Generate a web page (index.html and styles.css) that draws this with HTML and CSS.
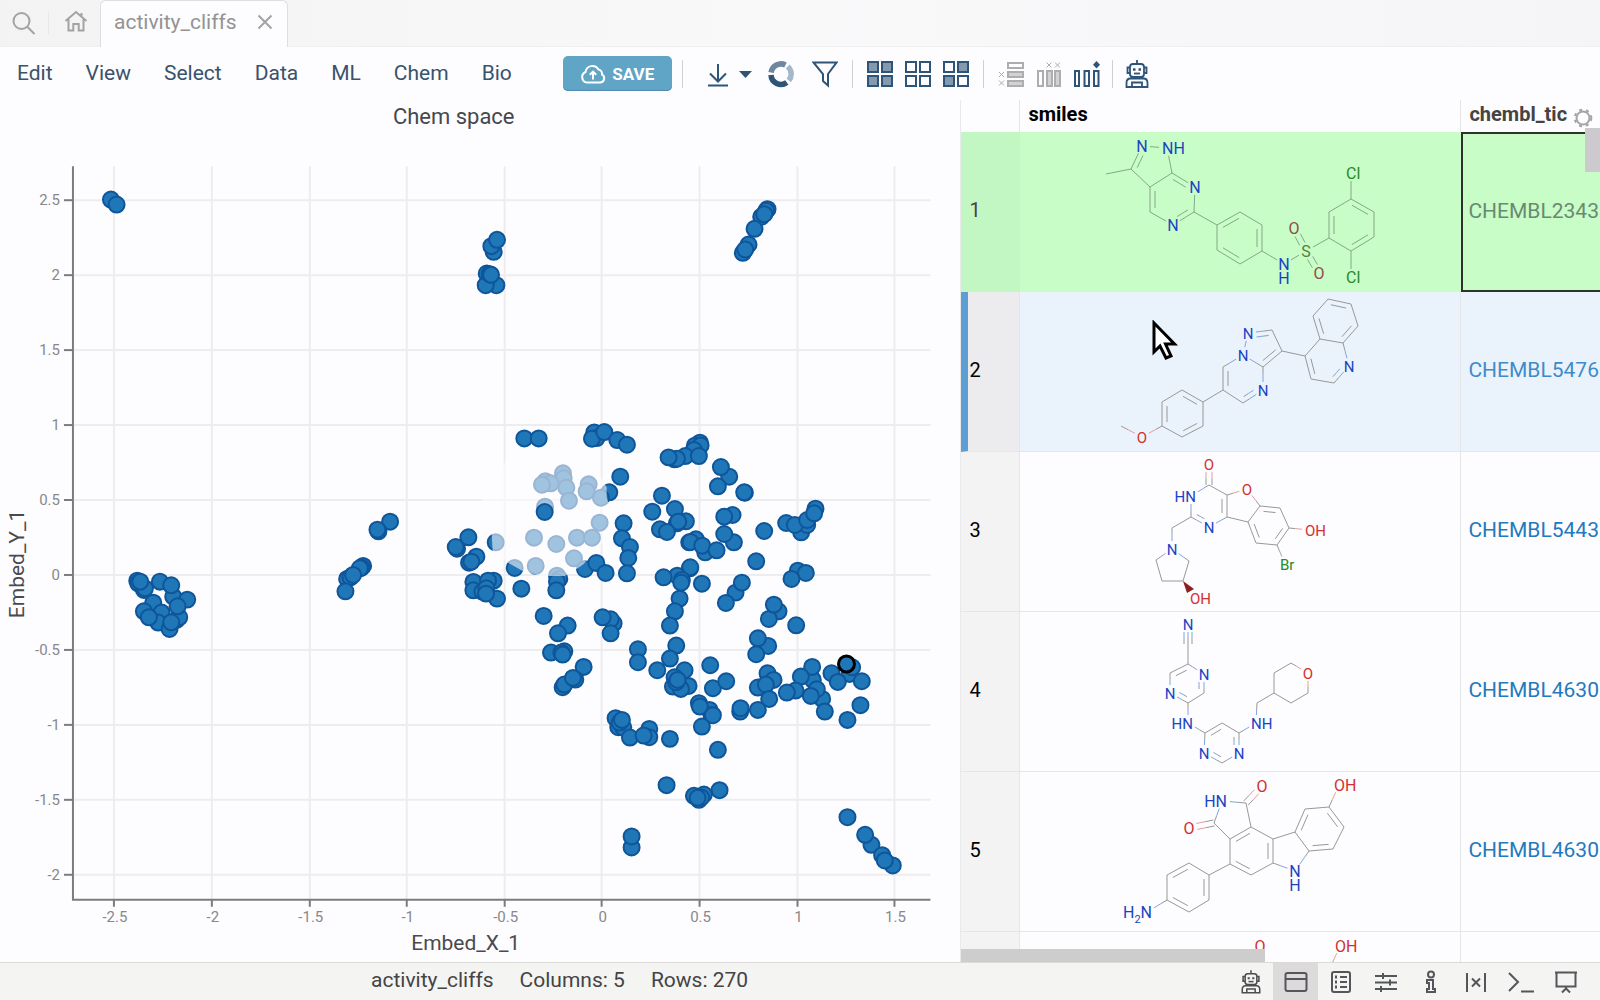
FILE: index.html
```html
<!DOCTYPE html>
<html lang="en">
<head>
<meta charset="utf-8">
<title>activity_cliffs</title>
<link rel="stylesheet" href="styles.css">
</head>
<body>
<header class="tabs">
  <button class="tabs-btn" aria-label="Search"><svg width="24" height="24" viewBox="0 0 24 24"><circle cx="9.500" cy="10" r="8"/><path d="M15.500 16l7 7"/></svg></button>
  <span class="tabs-sep"></span>
  <button class="tabs-btn home" aria-label="Home"><svg width="24" height="24" viewBox="0 0 24 24"><path d="M1.500 12L12 3l10.500 9M4.500 10v11.500h4.800v-6.500h5.400v6.500h4.800V10M17.500 4v4"/></svg></button>
  <div class="tab"><span>activity_cliffs</span><button class="tab-close" aria-label="Close tab"><svg width="16" height="16" viewBox="0 0 16 16"><path d="M1.500 1.500l13 13M14.500 1.500l-13 13"/></svg></button></div>
</header>

<nav class="toolbar">
  <div class="menu">
    <button>Edit</button><button>View</button><button>Select</button><button>Data</button><button>ML</button><button>Chem</button><button>Bio</button>
  </div>
  <button class="save"><svg width="26" height="22" viewBox="0 0 26 22"><path d="M7 19.500a5.500 5.500 0 0 1-1.500-10.500A7 7 0 0 1 18.500 6.500a4.500 4.500 0 0 1 3.500 5A4.300 4.300 0 0 1 20.500 19.500zM13 16.500V9M9.800 11.800L13 8.600l3.200 3.200"/></svg>SAVE</button>
  <div class="tools">
    <span class="sep"></span>
    <button class="tool download" aria-label="Download"><svg width="48" height="28" viewBox="0 0 48 28"><path class="line" d="M12 4v17M4 13.500l8 8 8-8M2 25.500h20"/><path class="solid" d="M33 11h13l-6.500 7z"/></svg></button>
    <button class="tool donut" aria-label="Usage"><svg width="26" height="28" viewBox="0 0 26 28"><g fill="none" stroke-width="5.500"><path stroke="#6e87a0" d="M3.100 12.500A10 10 0 0 1 17.500 5"/><path stroke="#a3b8ca" d="M19.700 6.500A10 10 0 0 1 20.800 20.500"/><path stroke="#2c5578" d="M3 15A10 10 0 0 0 18.800 22.500"/></g></svg></button>
    <button class="tool" aria-label="Filter"><svg width="26" height="28" viewBox="0 0 26 28"><path class="line" d="M1.500 2.500h23L16 14v11.500l-5-4.500v-7z"/></svg></button>
    <span class="sep"></span>
    <button class="tool" aria-label="Select all"><svg width="26" height="28" viewBox="0 0 26 28"><path class="line box full" d="M1 2h10v10H1zM15 2h10v10H15zM1 16h10v10H1zM15 16h10v10H15z"/></svg></button>
    <button class="tool" aria-label="Select none"><svg width="26" height="28" viewBox="0 0 26 28"><path class="line box" d="M1 2h10v10H1zM15 2h10v10H15zM1 16h10v10H1zM15 16h10v10H15z"/></svg></button>
    <button class="tool" aria-label="Invert selection"><svg width="26" height="28" viewBox="0 0 26 28"><path class="line box" d="M1 2h10v10H1zM15 16h10v10H15z"/><path class="line box full" d="M15 2h10v10H15zM1 16h10v10H1z"/></svg></button>
    <span class="sep"></span>
    <button class="tool off" aria-label="Remove rows"><svg width="26" height="28" viewBox="0 0 26 28"><path class="line box" d="M10 3h15v5H10z"/><path class="line box full" d="M10 12h15v5H10zM10 21h15v5H10z"/><path class="line" d="M1 12l5 5M6 12l-5 5M1 20.500l5 5M6 20.500l-5 5"/></svg></button>
    <button class="tool off" aria-label="Remove columns"><svg width="26" height="28" viewBox="0 0 26 28"><path class="line box" d="M2 11h5v15H2z"/><path class="line box full" d="M11 11h5v15h-5zM19 11h5v15h-5z"/><path class="line" d="M10.500 2.500l5 5M15.500 2.500l-5 5M19 2.500l5 5M24 2.500l-5 5"/></svg></button>
    <button class="tool" aria-label="Add column"><svg width="26" height="28" viewBox="0 0 26 28"><path class="line box" d="M1 11h4v15H1zM10.500 11h4.500v15h-4.500zM20 11h4.500v15H20z"/><path class="solid" d="M22.500 1l3.500 3.700-3.500 3.700L19 4.700z"/></svg></button>
    <span class="sep tight"></span>
    <button class="tool" aria-label="Assistant"><svg width="24" height="28" viewBox="0 0 24 28"><use href="#robot"/></svg></button>
  </div>
</nav>

<main class="main">
  <section class="chart" aria-label="Chem space">
    <svg id="plot" viewBox="0 100 961 862" role="img" aria-label="Scatter plot of Embed_Y_1 against Embed_X_1">
      <text class="plot-title" x="454" y="124">Chem space</text>
      <g id="axes"></g>
      <g id="points"></g>
      <text class="axis-title" x="466" y="950">Embed_X_1</text>
      <text class="axis-title" transform="translate(24 564) rotate(-90)">Embed_Y_1</text>
    </svg>
  </section>
  <section class="grid">
    <table>
      <colgroup><col class="c-num"><col class="c-mol"><col class="c-id"></colgroup>
      <thead><tr><th></th><th>smiles</th><th class="clipped">chembl_tic</th></tr></thead>
      <tbody>
        <tr class="selected"><th>1</th><td><svg class="mol"></svg></td><td class="current">CHEMBL2343</td></tr>
        <tr class="hover"><th>2</th><td><svg class="mol"></svg><svg class="pointer" width="28" height="42" viewBox="0 0 28 42"><path d="M2 3v29l6-6 6 12 5-2-5.500-12h9z"/></svg></td><td>CHEMBL5476</td></tr>
        <tr><th>3</th><td><svg class="mol"></svg></td><td>CHEMBL5443</td></tr>
        <tr><th>4</th><td><svg class="mol"></svg></td><td>CHEMBL4630</td></tr>
        <tr><th>5</th><td><svg class="mol"></svg></td><td>CHEMBL4630</td></tr>
        <tr><th></th><td><svg class="mol"></svg></td><td></td></tr>
      </tbody>
    </table>
    <button class="gear" aria-label="Grid settings"><svg width="20" height="20" viewBox="0 0 20 20"><circle cx="10" cy="10" r="6.500"/><circle class="teeth" cx="10" cy="10" r="8.300"/></svg></button>
    <span class="thumb-v"></span><span class="thumb-h"></span>
  </section>
</main>

<footer class="status">
  <div class="facts"><span>activity_cliffs</span><span>Columns: 5</span><span>Rows: 270</span></div>
  <div class="panels">
    <button aria-label="Assistant"><svg width="20" height="24" viewBox="0 0 24 28"><use href="#robot"/></svg></button>
    <button class="on" aria-label="Table view"><svg width="24" height="24" viewBox="0 0 24 24"><rect x="1.500" y="3" width="21" height="18" rx="2"/><path d="M2 9h20"/></svg></button>
    <button aria-label="Properties"><svg width="24" height="24" viewBox="0 0 24 24"><rect x="3" y="2" width="18" height="20" rx="2"/><path d="M11 7h7M11 12h7M11 17h7"/><path class="dots" d="M6 7h2M6 12h2M6 17h2"/></svg></button>
    <button aria-label="Settings"><svg width="24" height="24" viewBox="0 0 24 24"><path d="M1 6h22M1 12.500h22M1 19h22M9 3v6M16 9.500v6M7 16v6"/></svg></button>
    <button aria-label="Info"><svg width="24" height="24" viewBox="0 0 24 24"><circle cx="12" cy="4.500" r="3"/><path d="M8 10h6v9h2v3H8v-3h2v-6H8z"/></svg></button>
    <button aria-label="Variables"><svg width="24" height="24" viewBox="0 0 24 24"><path d="M3 3v19M21 3v19M8 8.500l8 8M16 8.500l-8 8"/></svg></button>
    <button aria-label="Console"><svg width="28" height="24" viewBox="0 0 28 24"><path d="M2 3l9 9-9 9M14 21.500h13"/></svg></button>
    <button aria-label="Presentation"><svg width="24" height="24" viewBox="0 0 24 24"><path d="M1 2.500h22M2.500 2.500v14h19v-14M12 16.500v3M8 22.500l4-4 4 4"/></svg></button>
  </div>
</footer>

<svg class="defs" aria-hidden="true"><symbol id="robot" viewBox="0 0 24 28" overflow="visible"><g fill="none" stroke="currentColor" stroke-width="1.800"><path d="M12 0v4M5 7q0-3 3-3h8q3 0 3 3v7q0 3-3 3H8q-3 0-3-3zM5 7.500H2.500V13H5M19 7.500h2.500V13H19M1.500 27v-4q0-4.500 4-4.500h13q4 0 4 4.500v4zM7 27v-4.500h10V27"/><path d="M9 13.500h6"/><path stroke-width="2.600" d="M8 9.500h2.500M13.500 9.500H16"/></g></symbol></svg>
<script src="draw.js"></script>
</body>
</html>
```
FILE: styles.css
```css
* { box-sizing: border-box; }
body { margin: 0; height: 100vh; display: flex; flex-direction: column; overflow: hidden; background: #fdfcfe; color: #333; font: 20px/24px Roboto, sans-serif; }
button { border: 0; padding: 0; margin: 0; background: none; font: inherit; color: inherit; }
svg { display: block; }
.defs { position: absolute; width: 0; height: 0; }

.tabs { display: flex; align-items: stretch; height: 47px; flex: none; background: linear-gradient(90deg, #f3f3f4, #f9f9fa 50%, #f5f5f8); border-bottom: 1px solid #efeff2; }
.tabs svg { fill: none; stroke: #a3a3a3; stroke-width: 2; }
.tabs-btn { display: flex; align-items: center; padding-left: 12px; }
.tabs-btn.home { padding: 0 12px 4px 15px; }
.tabs-sep { width: 1px; margin: 12px 0 12px 12px; background: #e8e8ea; }
.tab { display: flex; align-items: center; gap: 20px; height: 47px; padding: 0 14px 4px 13px; background: #fdfcfe; color: #939393; font-size: 21px; border: 1px solid #dedee0; border-bottom: 0; border-radius: 6px 6px 0 0; }

.toolbar { display: flex; align-items: center; flex: none; height: 53px; padding: 0 17px; color: #38536c; font-size: 21px; }
.menu { display: flex; gap: 33px; padding-bottom: 2px; }
.save { display: flex; align-items: center; justify-content: center; gap: 6px; width: 109px; height: 35px; margin-left: 51px; border-radius: 5px; background: #60a4c6; color: #fff; font-size: 17px; font-weight: 700; box-shadow: inset 0 -1px #5088b4; }
.save svg { fill: none; stroke: #fff; stroke-width: 2; }
.tools { display: flex; align-items: center; gap: 12px; margin-left: 8px; color: #2e5578; }
.sep { width: 1px; height: 28px; margin: 0 2px; background: #d0d0d3; }
.sep.tight { margin: 0; }
.download { margin: 0 2px 0 9px; }
.donut { margin-right: 6px; }
.line { fill: none; stroke: currentColor; stroke-width: 2; }
.box { stroke-width: 2; }
.full { fill: #8399ae; }
.off { color: #adadb0; }
.off .line { stroke-width: 1; }
.off .box { stroke-width: 2; }
.off .full { fill: #d2d2d4; }
.solid { fill: currentColor; }

.main { display: flex; flex: 1; min-height: 0; }
.chart { flex: 961; min-width: 0; }
.chart svg { width: 100%; height: 100%; }
#plot text { text-anchor: middle; }
.plot-title { font-size: 22px; fill: #45484d; }
.axis-title { font-size: 21px; fill: #4a4a4d; }
#plot .tick { font-size: 15px; fill: #88888b; }
#plot .tick-y { text-anchor: end; }
.gridline { stroke: #ededef; stroke-width: 2; }
.axis { stroke: #7c7c80; stroke-width: 2; fill: none; }
.point { fill: #1f77b8; stroke: #0f559a; stroke-width: 2; }
.point.current { stroke: #000; stroke-width: 3; }
.lasso { fill: #fdfcfe; fill-opacity: 0.58; }

.grid { position: relative; flex: 639; min-width: 0; overflow: hidden; border-left: 1px solid #e9e9eb; }
table { width: 800px; table-layout: fixed; border-spacing: 0; }
.c-num { width: 59px; }
.c-mol { width: 441px; }
th, td { height: 160px; padding: 0; text-align: left; border-right: 1px solid #e6e6e8; border-bottom: 1px solid #e6e6e8; }
td { position: relative; }
thead th { height: 32px; padding: 0 0 4px 8px; color: #000; font-weight: 700; border-bottom: 0; }
thead .clipped { color: #444; }
tbody th { padding: 0 0 3px 8px; color: #000; font-weight: 400; background: #f3f3f4; }
td:last-child { padding: 0 0 3px 7px; color: #2379bd; font-size: 21px; }
.selected td { background: #c8fdc8; border-color: #c8fdc8; }
.selected th { background: #c2f6c2; border-color: #c2f6c2; color: #444; }
.selected td.current { border: 2px solid #2b332b; padding-left: 5px; color: #688a70; }
.hover td { background: #eaf3fb; }
.hover th { background: #ececee; border-left: 7px solid #5d9fd3; padding-left: 1px; }
.hover td:last-child { color: #3f8bc9; }
.mol { width: 440px; height: 159px; }
.mol text { font-size: 15px; }
.mol line { stroke: #98989a; stroke-width: 1; }
.mol .n { fill: #1a43c4; stroke: none; }
.mol .o { fill: #d2302f; stroke: none; }
.mol .x { fill: #278a27; stroke: none; }
.mol .s { fill: #55803a; stroke: none; }
.mol line.bn { stroke: #7fa6e6; }
.mol line.bo { stroke: #dfa0a0; }
.mol line.bx { stroke: #90ba90; }
.selected .mol line { stroke: #84a884; }
.selected .mol .o { fill: #8f4a4a; }
.pointer { position: absolute; left: 132px; top: 28px; fill: #fff; stroke: #000; stroke-width: 3; }
.gear { position: absolute; right: 7px; top: 8px; background: #fdfcfe; }
.gear svg { fill: none; stroke: #a5a5a8; stroke-width: 2; }
.gear .teeth { stroke-dasharray: 3 4; }
.thumb-v { position: absolute; right: 0; top: 28px; width: 15px; height: 44px; background: #cccacf; }
.thumb-h { position: absolute; left: 0; bottom: 0; width: 304px; height: 13px; background: #cdcdcd; }

.status { display: flex; align-items: center; justify-content: space-between; flex: none; height: 38px; padding: 0 12px 0 371px; background: #f4f4f3; border-top: 1px solid #dcdad8; color: #444; font-size: 21px; }
.facts { display: flex; gap: 26px; padding-bottom: 3px; }
.panels { display: flex; align-self: stretch; }
.panels button { display: flex; align-items: center; justify-content: center; width: 45px; color: #4c4c4f; }
.panels .on { background: #dcdadb; }
.panels svg { fill: none; stroke: #55565a; stroke-width: 2; }
.panels .dots { stroke-width: 3; }
```
FILE: draw.js
```js
const NS = 'http://www.w3.org/2000/svg';
function add(parent, tag, attrs, text) {
  const el = document.createElementNS(NS, tag);
  for (const k in attrs) el.setAttribute(k, attrs[k]);
  if (text !== undefined) el.textContent = text;
  parent.appendChild(el);
  return el;
}

/* Axes */
const axes = document.getElementById('axes');
['-2.5', '-2', '-1.5', '-1', '-0.5', '0', '0.5', '1', '1.5'].forEach((t, i) => {
  const x = Math.round(114.4 + i * 97.6);
  add(axes, 'line', { class: 'gridline', x1: x, x2: x, y1: 166, y2: 900 });
  add(axes, 'line', { class: 'axis', x1: x, x2: x, y1: 900, y2: 907 });
  add(axes, 'text', { class: 'tick', x: x + 1, y: 922 }, t);
});
['2.5', '2', '1.5', '1', '0.5', '0', '-0.5', '-1', '-1.5', '-2'].forEach((t, i) => {
  const y = 200 + i * 75;
  add(axes, 'line', { class: 'gridline', x1: 73, x2: 931, y1: y, y2: y });
  add(axes, 'line', { class: 'axis', x1: 64, x2: 73, y1: y, y2: y });
  add(axes, 'text', { class: 'tick tick-y', x: 60, y: y + 5 }, t);
});
add(axes, 'path', { class: 'axis', d: 'M73 166V900H931' });

/* Points, by cluster: an origin, then offsets in thirds of a unit */
const clusters = [
  [0, 0, '333,598 350,613 1482,755 1475,738 1492,719 1461,820 1490,855 1458,855 1470,822 1474,824 2304,627 2300,632 2285,650 2294,642 2265,686 2247,733 2230,758 2237,748'],
  [0, 480, '1171,125 1136,154 1133,149 1090,258 1085,263 1080,265 1042,297 1052,292 1060,285 1037,334 412,302 415,310 432,330 435,325 421,305 480,305 520,350 514,316 562,359 460,368 485,398 432,394 475,428 447,412 530,420 538,412 509,447 533,379 514,427'],
  [440, 410, '370,190 372,205 317,214 333,220 307,224 380,233 388,272 447,223 441,244 316,290 480,338 283,383 350,402 412,383 457,383 403,445 288,468 168,397 225,474 254,85 297,85 464,67 471,84 457,86 494,66 533,90 562,104 542,200 509,247 484,263 552,340 547,385 571,411 566,444 562,490 436,477 470,459 498,489 52,416 86,382 48,411 110,440 88,458 95,455 101,516 162,512 101,541 128,545 145,512 140,535 172,566 139,551 245,536 352,497 359,507 352,515 350,541 312,618 384,647 355,670 522,640 513,628 489,622 513,670 334,728 374,724 365,728 369,734 432,771 369,832 407,809 374,824 400,804 595,718 595,757'],
  [640, 410, '181,98 166,107 183,106 163,120 137,138 105,148 112,146 87,142 178,138 269,200 244,171 235,229 316,248 314,247 67,257 38,305 106,297 139,334 112,340 116,335 61,358 82,366 169,388 149,397 153,396 197,427 188,407 231,421 279,315 254,320 283,397 254,372 374,363 350,454 440,339 485,367 503,345 466,345 503,330 528,296 524,310 475,482 499,489 456,507 151,475 152,472 113,497 72,502 127,510 125,518 187,521 120,566 106,604 91,647 288,548 307,518 259,579 417,604 388,627 403,584 470,646 386,708 355,685 350,733'],
  [540, 600, '410,137 391,176 353,211 435,211 405,232 447,258 400,260 424,267 410,247 414,240 512,196 520,265 560,244 684,220 702,240 655,263 679,254 689,297 655,330 602,335 603,325 820,240 818,201 784,230 768,272 742,278 848,297 832,268 814,288 856,335 876,220 930,222 895,246 938,202 967,244 963,316 924,360 478,310 510,330 516,345 481,320 520,346 487,380 228,355 236,382 251,383 240,368 247,360 271,413 329,387 329,412 312,407 391,417 535,450 381,556 540,571 463,588 493,584 478,600 485,593 474,594 276,743 276,710 924,652 996,735 977,705 1028,766 1060,797 1036,782']
];
const points = document.getElementById('points');
function dot(x, y, cls) { add(points, 'circle', { class: 'point ' + (cls || ''), cx: x, cy: y, r: 8 }); }
clusters.forEach(([ox, oy, list]) => list.split(' ').forEach(p => {
  const [x, y] = p.split(',').map(Number);
  dot(ox + x / 3, oy + y / 3);
}));
add(points, 'polygon', { class: 'lasso', points: '482,500 492,534 493,552 507,562 523,571 540,576 565,576 577,569 584,564 603,543 610,525 611,510 607,497 607,487 593,465 557,457 507,460' });
dot(545, 512);
dot(847, 664, 'current');

/* Molecules. Atom: [x, y, label]. Bond: [a, b, order]. A double bond in a ring has its second line inside the ring. */
const molecules = [
  { size: 16,
    atoms: [[122,14,'N'],[147,16,'NH'],[152,41],[130,55],[111,37],[86,42],[175,55,'N'],[174,80],[153,93,'N'],[130,80],
      [197,93],[220,80],[242,93],[242,119],[220,132],[197,118],[264,132,'N'],[286,119,'S'],[274,96,'O'],[299,141,'O'],
      [309,106],[331,119],[354,105],[354,80],[331,67],[309,80],[331,41,'Cl'],[331,145,'Cl']],
    bonds: [[0,1],[1,2],[2,3],[3,4],[4,0,2],[4,5],[2,6,2],[6,7],[7,8,2],[8,9],[9,3,2],[7,10],[10,11,2],[11,12],[12,13,2],[13,14],[14,15,2],[15,10],
      [13,16],[16,17],[17,18,2],[17,19,2],[17,20],[20,21],[21,22,2],[22,23],[23,24,2],[24,25],[25,20,2],[24,26],[21,27]],
    rings: [[2,3,9,8,7,6],[0,1,2,3,4],[10,11,12,13,14,15],[20,21,22,23,24,25]], extra: [[264,146,'H']] },
  { atoms: [[228,41,'N'],[252,38],[262,59],[243,75],[223,63,'N'],[203,75],[203,98],[223,111],[243,98,'N'],
      [183,110],[183,134],[162,145],[142,134],[142,110],[162,98],[122,145,'O'],[101,134],
      [285,64],[300,47],[323,51],[329,74,'N'],[314,91],[291,87],[293,24],[308,7],[331,12],[338,34]],
    bonds: [[0,1,2],[1,2],[2,3,2],[3,4],[4,0],[4,5],[5,6,2],[6,7],[7,8,2],[8,3],[6,9],[9,10],[10,11,2],[11,12],[12,13,2],[13,14],[14,9,2],[12,15],[15,16],
      [2,17],[17,18],[18,19],[19,20],[20,21,2],[21,22],[22,17,2],[18,23,2],[23,24],[24,25,2],[25,26],[26,19,2]],
    rings: [[0,1,2,3,4],[3,4,5,6,7,8],[9,10,11,12,13,14],[17,18,19,20,21,22],[18,19,26,25,24,23]] },
  { atoms: [[189,12,'O'],[189,33],[171,44,'HN'],[171,65],[189,75,'N'],[207,65],[207,43],[227,37,'O'],[240,54],[228,70],
      [260,56],[269,76],[257,93],[236,91],[290,78,'OH'],[265,112,'Br'],[152,76],[152,97,'N'],[136,108],[142,129],[163,129],[169,109],[175,146,'OH']],
    bonds: [[0,1,2],[1,2],[2,3],[3,4,2],[4,5],[5,6,2],[6,1],[6,7],[7,8],[8,9],[9,5],[8,10,2],[10,11],[11,12,2],[12,13],[13,9,2],[11,14],[12,15],[3,16],[16,17],[17,18],[18,19],[19,20],[20,21],[21,17]],
    rings: [[1,2,3,4,5,6],[8,9,13,12,11,10]], wedge: '163,129 174,137 167,141' },
  { atoms: [[168,12,'N'],[168,32],[168,52],[184,62,'N'],[184,81],[168,91],[150,81,'N'],[150,61],[168,111,'HN'],[185,121],[202,111],[219,121],[219,141,'N'],[202,151],[184,141,'N'],
      [236,111,'NH'],[237,91],[254,81],[254,61],[271,51],[288,61,'O'],[288,81],[271,91]],
    bonds: [[0,1,3],[1,2],[2,3],[3,4,2],[4,5],[5,6,2],[6,7],[7,2,2],[5,8],[8,9],[9,10,2],[10,11],[11,12,2],[12,13],[13,14,2],[14,9],[11,15],[15,16],[16,17],[17,18],[18,19],[19,20],[20,21],[21,22],[22,17]],
    rings: [[2,3,4,5,6,7],[9,10,11,12,13,14]] },
  { size: 16,
    atoms: [[242,14,'O'],[226,31],[202,29,'HN'],[194,51],[169,56,'O'],[210,67],[231,55],[253,67],[253,91],[231,103],[210,92],
      [189,103],[189,128],[169,140],[147,128],[147,103],[169,91],[127,140,'H2N'],[275,60],[289,79],[275,99,'N'],[285,37],[309,35],[324,55],[313,77],[319,13,'OH']],
    bonds: [[0,1,2],[1,2],[2,3],[3,4,2],[3,5],[5,6,2],[6,1],[6,7],[7,8,2],[8,9],[9,10,2],[10,5],[10,11],[11,12,2],[12,13],[13,14,2],[14,15],[15,16,2],[16,11],[14,17],
      [7,18],[18,19],[19,20],[20,8],[18,21,2],[21,22],[22,23,2],[23,24],[24,19,2],[22,25]],
    rings: [[5,6,7,8,9,10],[11,12,13,14,15,16],[18,19,24,23,22,21]], extra: [[275,113,'H']] },
  { size: 16, atoms: [[240,14,'O'],[320,14,'OH'],[310,36]], bonds: [[1,2]], rings: [] }
];
const kind = l => !l ? '' : /Cl|Br/.test(l) ? 'x' : l.includes('S') ? 's' : l.includes('O') ? 'o' : 'n';

function drawLabel(svg, x, y, label, size) {
  const wide = label.length > 1;
  const anchor = !wide ? 'middle' : label[0] === 'H' ? 'end' : 'start';
  const dx = anchor === 'start' ? -5 : anchor === 'end' ? 5 : 0;
  const t = add(svg, 'text', { x: x + dx, y: y + 6, 'text-anchor': anchor, class: kind(label), style: 'font-size:' + size + 'px' });
  if (label === 'H2N') {
    t.textContent = 'H';
    add(t, 'tspan', { dy: 5, 'font-size': 11 }, '2');
    add(t, 'tspan', { dy: -5 }, 'N');
  } else t.textContent = label;
}

document.querySelectorAll('.mol').forEach((svg, i) => {
  const m = molecules[i], A = m.atoms, size = m.size || 15;
  svg.setAttribute('viewBox', '0 0 440 159');
  const line = (x1, y1, x2, y2, k1, k2) => {
    const mx = (x1 + x2) / 2, my = (y1 + y2) / 2;
    if (k1 === k2) return add(svg, 'line', { x1, y1, x2, y2, class: 'b' + k1 });
    add(svg, 'line', { x1, y1, x2: mx, y2: my, class: 'b' + k1 });
    add(svg, 'line', { x1: mx, y1: my, x2, y2, class: 'b' + k2 });
  };
  m.bonds.forEach(([a, b, order]) => {
    const p = A[a], q = A[b], len = Math.hypot(q[0] - p[0], q[1] - p[1]);
    const ux = (q[0] - p[0]) / len, uy = (q[1] - p[1]) / len;
    const k1 = kind(p[2]), k2 = kind(q[2]);
    const cut = (off, inset) => {
      const s = p[2] ? 8 : inset, e = q[2] ? 8 : inset;
      line(p[0] + ux * s - uy * off, p[1] + uy * s + ux * off, q[0] - ux * e - uy * off, q[1] - uy * e + ux * off, k1, k2);
    };
    const ring = m.rings.find(r => r.includes(a) && r.includes(b));
    if (order === 3) { cut(-4, 0); cut(0, 0); cut(4, 0); }
    else if (order === 2 && !ring) { cut(-3, 0); cut(3, 0); }
    else {
      cut(0, 0);
      if (order === 2) {
        const cx = ring.reduce((s, n) => s + A[n][0], 0) / ring.length - p[0];
        const cy = ring.reduce((s, n) => s + A[n][1], 0) / ring.length - p[1];
        cut(ux * cy - uy * cx > 0 ? 5 : -5, 4);
      }
    }
  });
  if (m.wedge) add(svg, 'polygon', { points: m.wedge, fill: '#8c1f1f' });
  A.concat(m.extra || []).forEach(([x, y, label]) => {
    if (label === 'H') add(svg, 'text', { x, y: y + 6, 'text-anchor': 'middle', class: 'n', style: 'font-size:' + size + 'px' }, 'H');
    else if (label) drawLabel(svg, x, y, label, size);
  });
});
```
